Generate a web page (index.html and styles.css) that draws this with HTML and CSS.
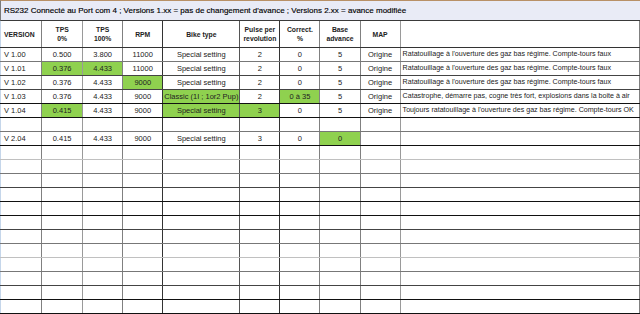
FILE: index.html
```html
<!DOCTYPE html>
<html lang="fr">
<head>
<meta charset="utf-8">
<title>RS232 versions</title>
<link rel="stylesheet" href="styles.css">
</head>
<body>
<div class="sheet">
  <div class="title">RS232 Connecté au Port com 4 ; Versions 1.xx = pas de changement d'avance ; Versions 2.xx = avance modifiée</div>
  <table class="grid">
    <colgroup>
      <col class="c41"><col class="c41"><col class="c40"><col class="c40"><col class="c77"><col class="c40"><col class="c40"><col class="c40"><col class="c40"><col class="c240">
    </colgroup>
    <thead>
      <tr class="head">
        <th class="left">VERSION</th>
        <th>TPS<br>0%</th>
        <th>TPS<br>100%</th>
        <th>RPM</th>
        <th>Bike type</th>
        <th>Pulse per<br>revolution</th>
        <th>Correct.<br>%</th>
        <th>Base<br>advance</th>
        <th>MAP</th>
        <th></th>
      </tr>
    </thead>
    <tbody>
      <tr class="l-mid">
        <td class="left">V 1.00</td><td>0.500</td><td>3.800</td><td>11000</td><td>Special setting</td><td>2</td><td>0</td><td>5</td><td>Origine</td><td class="note">Ratatouillage à l'ouverture des gaz bas régime. Compte-tours faux</td>
      </tr>
      <tr class="l-dark">
        <td class="left">V 1.01</td><td class="g">0.376</td><td class="g">4.433</td><td>11000</td><td>Special setting</td><td>2</td><td>0</td><td>5</td><td>Origine</td><td class="note">Ratatouillage à l'ouverture des gaz bas régime. Compte-tours faux</td>
      </tr>
      <tr class="l-dark">
        <td class="left">V 1.02</td><td>0.376</td><td>4.433</td><td class="g">9000</td><td>Special setting</td><td>2</td><td>0</td><td>5</td><td>Origine</td><td class="note">Ratatouillage à l'ouverture des gaz bas régime. Compte-tours faux</td>
      </tr>
      <tr class="l-black">
        <td class="left">V 1.03</td><td>0.376</td><td>4.433</td><td>9000</td><td class="g">Classic (1I ; 1or2 Pup)</td><td>2</td><td class="g">0 à 35</td><td>5</td><td>Origine</td><td class="note">Catastrophe, démarre pas, cogne très fort, explosions dans la boite à air</td>
      </tr>
      <tr class="l-black">
        <td class="left">V 1.04</td><td class="g">0.415</td><td>4.433</td><td>9000</td><td class="g">Special setting</td><td class="g">3</td><td>0</td><td>5</td><td>Origine</td><td class="note">Toujours ratatouillage à l'ouverture des gaz bas régime. Compte-tours OK</td>
      </tr>
      <tr class="l-mid"><td></td><td></td><td></td><td></td><td></td><td></td><td></td><td></td><td></td><td></td></tr>
      <tr class="l-black">
        <td class="left">V 2.04</td><td>0.415</td><td>4.433</td><td>9000</td><td>Special setting</td><td>3</td><td>0</td><td class="g">0</td><td></td><td></td>
      </tr>
      <tr class="l-light"><td></td><td></td><td></td><td></td><td></td><td></td><td></td><td></td><td></td><td></td></tr>
      <tr class="l-mid"><td></td><td></td><td></td><td></td><td></td><td></td><td></td><td></td><td></td><td></td></tr>
      <tr class="l-dark"><td></td><td></td><td></td><td></td><td></td><td></td><td></td><td></td><td></td><td></td></tr>
      <tr class="l-black"><td></td><td></td><td></td><td></td><td></td><td></td><td></td><td></td><td></td><td></td></tr>
      <tr class="l-black"><td></td><td></td><td></td><td></td><td></td><td></td><td></td><td></td><td></td><td></td></tr>
      <tr class="l-dark"><td></td><td></td><td></td><td></td><td></td><td></td><td></td><td></td><td></td><td></td></tr>
      <tr class="l-mid"><td></td><td></td><td></td><td></td><td></td><td></td><td></td><td></td><td></td><td></td></tr>
      <tr class="l-light"><td></td><td></td><td></td><td></td><td></td><td></td><td></td><td></td><td></td><td></td></tr>
      <tr class="l-mid"><td></td><td></td><td></td><td></td><td></td><td></td><td></td><td></td><td></td><td></td></tr>
      <tr class="l-dark"><td></td><td></td><td></td><td></td><td></td><td></td><td></td><td></td><td></td><td></td></tr>
      <tr class="l-black"><td></td><td></td><td></td><td></td><td></td><td></td><td></td><td></td><td></td><td></td></tr>
      <tr class="l-black"><td></td><td></td><td></td><td></td><td></td><td></td><td></td><td></td><td></td><td></td></tr>
    </tbody>
  </table>
</div>
</body>
</html>
```

FILE: styles.css
```css
html, body {
  margin: 0;
  padding: 0;
  background: #ffffff;
}
body {
  font-family: "Liberation Sans", Arial, sans-serif;
  color: #1a1a1a;
  overflow: hidden;
}
.sheet {
  width: 640px;
  height: 314px;
  overflow: hidden;
}
.title {
  height: 19px;
  line-height: 19px;
  padding-left: 3px;
  font-size: 8px;
  color: #000;
  background: #e9ebf6;
  border-top: 1px solid #b89066;
  border-left: 1px solid #7a7a7a;
  border-bottom: 1px solid #3a3a3a;
  white-space: nowrap;
  -webkit-text-stroke: 0.15px #000;
}
.grid {
  border-collapse: collapse;
  table-layout: fixed;
  width: 640px;
  font-size: 7.5px;
}
.c41 { width: 41px; }
.c40 { width: 40px; }
.c77 { width: 77px; }
.c240 { width: 239px; }
.grid th,
.grid td {
  padding: 0 1px;
  text-align: center;
  white-space: nowrap;
  overflow: hidden;
  border-left: 1px solid #808080;
  border-right: 1px solid #808080;
  vertical-align: middle;
}
.grid th:first-child,
.grid td:first-child {
  border-left: 1px solid #c5d6ea;
}
.grid th:nth-child(4),
.grid td:nth-child(4),
.grid th:nth-child(6),
.grid td:nth-child(6) {
  border-right-color: #333;
}
.grid th:nth-child(5),
.grid td:nth-child(5) {
  border-left-color: #333;
  border-right-color: #555;
}
.grid th:nth-child(7),
.grid td:nth-child(7) {
  border-left-color: #222;
}
.grid th:nth-child(2),
.grid td:nth-child(2),
.grid th:nth-child(9),
.grid td:nth-child(9) {
  border-right-color: #9a9a9a;
}
.grid th {
  height: 26px;
  font-size: 6.8px;
  font-weight: bold;
  line-height: 9px;
  color: #222;
  border-bottom: 1px solid #333;
}
.grid tbody tr {
  height: 14px;
}
.grid td {
  height: 13px;
  line-height: 13px;
  color: #222;
  border-bottom: 1px solid #444;
}
.grid tr.l-light td { border-bottom-color: #c0c0c0; }
.grid tr.l-mid td { border-bottom-color: #777; }
.grid tr.l-dark td { border-bottom-color: #444; }
.grid tr.l-black td { border-bottom-color: #111; }
.grid .left {
  text-align: left;
  padding-left: 3px;
}
.grid td.note {
  text-align: left;
  padding-left: 2px;
  font-size: 7.1px;
}
.grid td.g {
  background: #8fd14f;
}
```
